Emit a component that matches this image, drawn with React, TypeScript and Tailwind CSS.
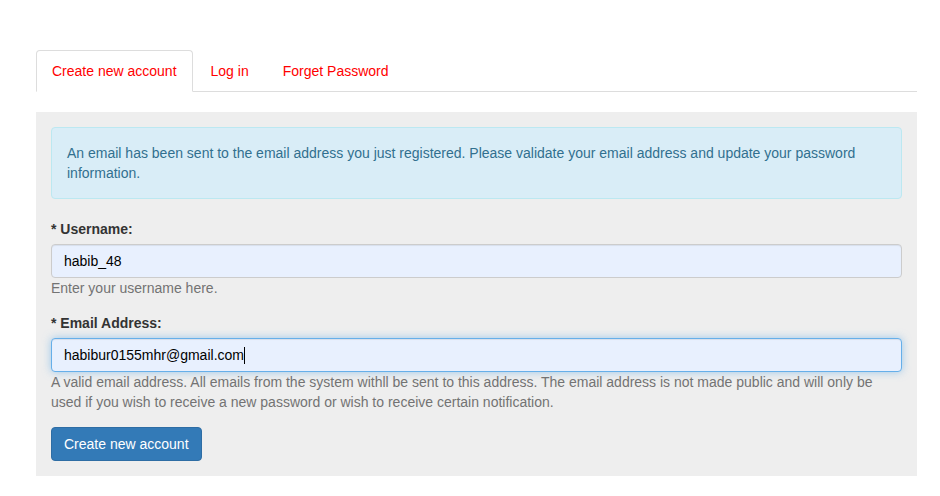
export default function App() {
  return (
    <div className="min-h-screen bg-white text-[14px] leading-[20px] text-[#333]" style={{ fontFamily: '"Liberation Sans", Arial, sans-serif' }}>
      <div className="pl-[36px] pr-[23px] pt-[50px]">
        {/* tabs */}
        <ul className="flex border-b border-[#ddd]">
          <li className="-mb-px mr-[2px]">
            <a className="block px-[15px] py-[10px] border border-[#ddd] border-b-transparent rounded-t-[4px] bg-white text-[#ff0000]">
              Create new account
            </a>
          </li>
          <li className="-mb-px mr-[2px]">
            <a className="block px-[15px] py-[10px] border border-transparent text-[#ff0000]">Log in</a>
          </li>
          <li className="-mb-px mr-[2px]">
            <a className="block px-[15px] py-[10px] border border-transparent text-[#ff0000]">Forget Password</a>
          </li>
        </ul>

        {/* panel */}
        <div className="mt-[20px] bg-[#eeeeee] p-[15px]">
          <div className="mb-[20px] rounded-[4px] border border-[#bce8f1] bg-[#d9edf7] p-[15px] text-[#31708f]">
            An email has been sent to the email address you just registered. Please validate your email address and update your password information.
          </div>

          <div className="mb-[15px]">
            <label className="block mb-[5px] font-bold">* Username:</label>
            <div className="h-[34px] rounded-[4px] border border-[#ccc] bg-[#e8f0fe] px-[12px] py-[6px] text-black shadow-[inset_0_1px_1px_rgba(0,0,0,0.075)]">
              habib_48
            </div>
            <p className="mt-0 text-[#737373]">Enter your username here.</p>
          </div>

          <div className="mb-[15px]">
            <label className="block mb-[5px] font-bold">* Email Address:</label>
            <div className="h-[34px] rounded-[4px] border border-[#66afe9] bg-[#e8f0fe] px-[12px] py-[6px] text-black shadow-[inset_0_1px_1px_rgba(0,0,0,0.075),0_0_8px_rgba(102,175,233,0.6)]">
              <span>habibur0155mhr@gmail.com</span>
              <span className="inline-block w-px h-[17px] bg-black align-[-4px]" />
            </div>
            <p className="mt-0 text-[#737373]">
              A valid email address. All emails from the system withll be sent to this address. The email address is not made public and will only be used if you wish to receive a new password or wish to receive certain notification.
            </p>
          </div>

          <button className="h-[34px] rounded-[4px] border border-[#2e6da4] bg-[#337ab7] px-[12px] text-white">
            Create new account
          </button>
        </div>
      </div>
    </div>
  )
}
